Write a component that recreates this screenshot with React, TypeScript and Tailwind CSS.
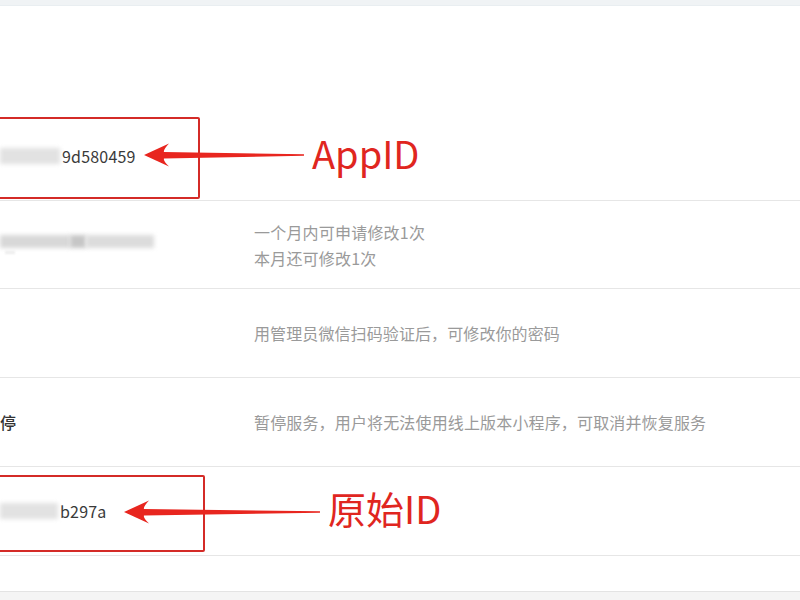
const font = { fontFamily: '"Noto Sans CJK SC", "Noto Sans", sans-serif' };

function Arrow({ length }: { length: number }) {
  const end = length - 2;
  return (
    <svg width={length} height="26" viewBox={`0 0 ${length} 26`} className="block">
      <path
        d={`M4 13 L29 1.5 Q23 8 24 10 L${end} 12.2 L${end} 13.8 L24 16.5 Q23 18.5 29 24.5 Z`}
        fill="#e8261f"
      />
    </svg>
  );
}

function Blur({ w, h, tone = 'bg-[#e3e3e3]' }: { w: string; h: string; tone?: string }) {
  return <div className={`${w} ${h} ${tone} blur-[2px] shrink-0`}></div>;
}

export default function App() {
  return (
    <div className="w-[800px] h-[600px] bg-white overflow-hidden flex flex-col" style={font}>
      {/* TOP BAND */}
      <div className="h-[6px] bg-[#f0f3f5] border-b border-[#e9eef1]"></div>
      <div className="h-[106px]"></div>

      {/* ROW: APPID */}
      <div className="relative h-[89px] border-b border-[#e6e6e6] flex items-center">
        <div className="w-[254px] flex items-center">
          <div className="w-[62px] h-[20px] flex items-center">
            <div className="w-[60px] h-[16px] bg-[#e2e2e2] blur-[2px]"></div>
          </div>
          <span className="text-[16px] text-[#3a3a3a] leading-none tracking-[0.2px]">9d580459</span>
        </div>
        {/* annotation */}
        <div className="absolute left-[-6px] top-[5px] w-[206px] h-[82px] border-2 border-[#d42b27] rounded-[2px]"></div>
        <div className="absolute left-[140px] top-[30px]">
          <Arrow length={166} />
        </div>
        <div className="absolute left-[312px] top-[22px] text-[38px] leading-none text-[#e0261f]">AppID</div>
      </div>

      {/* ROW: NAME */}
      <div className="h-[88px] border-b border-[#e6e6e6] flex items-center">
        <div className="w-[254px] flex flex-col gap-[3px]">
          <div className="flex items-center">
            <Blur w="w-[70px]" h="h-[13px]" tone="bg-[#d8d8d8]" />
            <Blur w="w-[16px]" h="h-[13px]" tone="bg-[#c6c6c6]" />
            <Blur w="w-[68px]" h="h-[13px]" tone="bg-[#dcdcdc]" />
          </div>
          <div className="ml-[5px] w-[10px] h-[3px] bg-[#ececec] blur-[1px]"></div>
        </div>
        <div className="text-[16px] leading-[26px] text-[#9a9a9a] tracking-[0.2px]">
          <div>一个月内可申请修改1次</div>
          <div>本月还可修改1次</div>
        </div>
      </div>

      {/* ROW: PASSWORD */}
      <div className="h-[89px] border-b border-[#e6e6e6] flex items-center">
        <div className="w-[254px]"></div>
        <div className="text-[16px] text-[#9a9a9a] tracking-[0.1px]">用管理员微信扫码验证后，可修改你的密码</div>
      </div>

      {/* ROW: PAUSE */}
      <div className="h-[89px] border-b border-[#e6e6e6] flex items-center">
        <div className="w-[254px] text-[16px] text-[#333333] font-medium">停</div>
        <div className="text-[16px] text-[#9a9a9a] tracking-[0.15px]">
          暂停服务，用户将无法使用线上版本小程序，可取消并恢复服务
        </div>
      </div>

      {/* ROW: ORIGINAL ID */}
      <div className="relative h-[89px] border-b border-[#e6e6e6] flex items-center">
        <div className="w-[254px] flex items-center">
          <div className="w-[60px] h-[20px] flex items-center">
            <div className="w-[58px] h-[16px] bg-[#e2e2e2] blur-[2px]"></div>
          </div>
          <span className="text-[16px] text-[#3a3a3a] leading-none tracking-[0.2px]">b297a</span>
        </div>
        {/* annotation */}
        <div className="absolute left-[-6px] top-[8px] w-[211px] h-[77px] border-2 border-[#d42b27] rounded-[2px]"></div>
        <div className="absolute left-[120px] top-[32px]">
          <Arrow length={202} />
        </div>
        <div className="absolute left-[328px] top-[22px] text-[38px] leading-none text-[#e0261f]">原始ID</div>
      </div>

      <div className="h-[35px]"></div>
      <div className="flex-1 bg-[#f4f4f4] border-t border-[#e3e3e3]"></div>
    </div>
  );
}
